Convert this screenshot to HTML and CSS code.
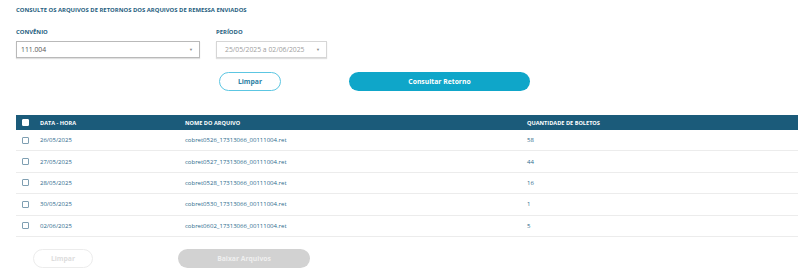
FILE: index.html
```html
<!DOCTYPE html>
<html lang="pt-BR">
<head>
  <meta charset="UTF-8">
  <title>Consulta de Retornos</title>
  <link rel="stylesheet" href="styles.css">
</head>
<body>
  <div class="page">
    <h2 class="page-title">Consulte os arquivos de retornos dos arquivos de remessa enviados</h2>

    <div class="filters">
      <div class="field field-convenio">
        <label>Convênio</label>
        <div class="select">
          <span>111.004</span>
          <span class="arrow">&#9660;</span>
        </div>
      </div>
      <div class="field field-periodo">
        <label>Período</label>
        <div class="select disabled">
          <span>25/05/2025 a 02/06/2025</span>
          <span class="arrow">&#9660;</span>
        </div>
      </div>
    </div>

    <div class="actions">
      <button class="btn btn-outline btn-limpar">Limpar</button>
      <button class="btn btn-primary btn-consultar">Consultar Retorno</button>
    </div>

    <div class="table">
      <div class="row head">
        <span class="check checked"></span>
        <span>Data - Hora</span>
        <span>Nome do Arquivo</span>
        <span>Quantidade de Boletos</span>
      </div>
      <div class="row">
        <span class="check"></span>
        <span>26/05/2025</span>
        <span>cobret0526_17313066_00111004.ret</span>
        <span>58</span>
      </div>
      <div class="row">
        <span class="check"></span>
        <span>27/05/2025</span>
        <span>cobret0527_17313066_00111004.ret</span>
        <span>44</span>
      </div>
      <div class="row">
        <span class="check"></span>
        <span>28/05/2025</span>
        <span>cobret0528_17313066_00111004.ret</span>
        <span>16</span>
      </div>
      <div class="row">
        <span class="check"></span>
        <span>30/05/2025</span>
        <span>cobret0530_17313066_00111004.ret</span>
        <span>1</span>
      </div>
      <div class="row">
        <span class="check"></span>
        <span>02/06/2025</span>
        <span>cobret0602_17313066_00111004.ret</span>
        <span>5</span>
      </div>
    </div>

    <div class="actions bottom">
      <button class="btn btn-outline disabled btn-limpar-2" disabled>Limpar</button>
      <button class="btn btn-primary disabled btn-baixar" disabled>Baixar Arquivos</button>
    </div>
  </div>
</body>
</html>
```

FILE: styles.css
```css
* {
  margin: 0;
  padding: 0;
  box-sizing: border-box;
}

body {
  font-family: 'Open Sans', sans-serif;
  background-color: #ffffff;
  color: #2b6a8c;
}

.page {
  width: 782px;
  margin-left: 16px;
  padding-top: 6px;
}

.page-title {
  font-size: 5.9px;
  font-weight: 700;
  text-transform: uppercase;
  color: #1f5e80;
  line-height: 8px;
}

.filters {
  display: flex;
  gap: 16px;
  margin-top: 14px;
}

.field label {
  display: block;
  font-size: 5.9px;
  font-weight: 700;
  text-transform: uppercase;
  color: #1f5e80;
  line-height: 8px;
  margin-bottom: 5px;
}

.field-convenio {
  width: 184px;
}

.field-periodo {
  width: 111px;
}

.select {
  display: flex;
  justify-content: space-between;
  align-items: center;
  height: 17px;
  padding: 0 6px 0 4px;
  border: 1px solid #b9b9b9;
  box-shadow: 0 1px 1px rgba(0, 0, 0, 0.12);
  font-size: 6.8px;
  color: #555555;
  background-color: #ffffff;
}

.select.disabled {
  border-color: #d6d6d6;
  color: #a0a0a0;
  padding-left: 8px;
}

.select .arrow {
  font-size: 4px;
  color: #888888;
}

.actions {
  display: flex;
  margin-top: 14px;
}

.btn {
  font-family: 'Open Sans', sans-serif;
  font-size: 6.8px;
  font-weight: 700;
  height: 19px;
  border-radius: 10px;
  cursor: pointer;
}

.btn-outline {
  background-color: #ffffff;
  border: 1.5px solid #5cc6e2;
  color: #2a7fa3;
}

.btn-primary {
  background-color: #0fa6c9;
  border: none;
  color: #ffffff;
}

.btn-limpar {
  width: 62px;
  margin-left: 203px;
}

.btn-consultar {
  width: 181px;
  margin-left: 68px;
}

.table {
  margin-top: 24px;
}

.row {
  display: grid;
  grid-template-columns: 24px 145px 342px 1fr;
  align-items: center;
  height: 21.4px;
  border-bottom: 1px solid #ececec;
  font-size: 6px;
  color: #2b6a8c;
}

.row.head {
  height: 15px;
  background-color: #1b5b7a;
  border-bottom: none;
  color: #ffffff;
  font-weight: 700;
  text-transform: uppercase;
  font-size: 5.6px;
}

.check {
  width: 7px;
  height: 7px;
  margin-left: 6px;
  border: 1px solid #7f9fb2;
  border-radius: 1px;
  background-color: #ffffff;
}

.check.checked {
  border-color: #ffffff;
}

.actions.bottom {
  margin-top: 12px;
}

.btn.disabled {
  cursor: default;
}

.btn-outline.disabled {
  border-color: #ececec;
  color: #dddddd;
}

.btn-primary.disabled {
  background-color: #d2d2d2;
  color: #efefef;
}

.btn-limpar-2 {
  width: 60px;
  margin-left: 17px;
}

.btn-baixar {
  width: 132px;
  margin-left: 85px;
}
```
